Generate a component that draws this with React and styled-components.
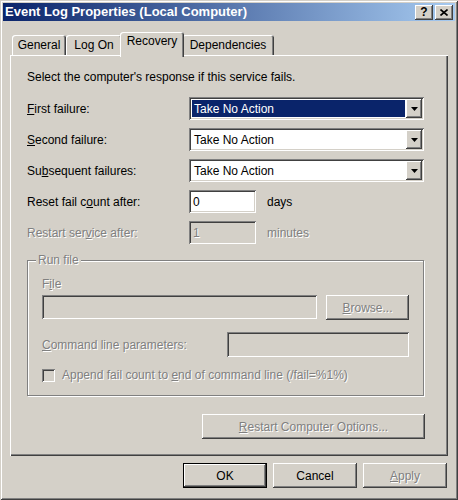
import React from 'react';
import styled, { createGlobalStyle } from 'styled-components';

const Global = createGlobalStyle`
  html, body { margin: 0; padding: 0; background: #d4d0c8; }
  body { font-family: "Liberation Sans", Arial, sans-serif; font-size: 12px; }
  * { box-sizing: border-box; }
`;

const raised = `box-shadow: inset -1px -1px #404040, inset 1px 1px #ffffff, inset -2px -2px #808080, inset 2px 2px #d4d0c8;`;
const sunken = `box-shadow: inset 1px 1px #808080, inset -1px -1px #ffffff, inset 2px 2px #404040, inset -2px -2px #d4d0c8;`;
const disabledText = `color: #808080; text-shadow: 1px 1px 0 #ffffff;`;

const Window = styled.div`
  width: 458px;
  height: 500px;
  padding: 3px;
  display: flex;
  flex-direction: column;
  background: #d4d0c8;
  box-shadow: inset 1px 1px #d4d0c8, inset -1px -1px #404040, inset 2px 2px #ffffff, inset -2px -2px #808080;
  color: #000;
  font-family: "Liberation Sans", Arial, sans-serif;
  font-size: 12px;
  line-height: 14px;
`;

const TitleBar = styled.div`
  height: 18px;
  flex: none;
  display: flex;
  align-items: center;
  padding: 0 2px;
  background: linear-gradient(to right, #0a246a, #a6caf0);
`;

const Title = styled.div`
  flex: 1;
  color: #ffffff;
  font-weight: bold;
  font-size: 13px;
  white-space: nowrap;
`;

const CapButton = styled.div`
  width: 18px;
  height: 15px;
  background: #d4d0c8;
  ${raised}
  display: flex;
  align-items: center;
  justify-content: center;
  font-weight: bold;
  font-size: 12px;
  line-height: 12px;
  color: #000;
  & + & { margin-left: 2px; }
`;

const Body = styled.div`
  flex: 1;
  display: flex;
  flex-direction: column;
  padding: 11px 7px 9px;
`;

const TabRow = styled.div`
  height: 23px;
  flex: none;
  display: flex;
  align-items: flex-end;
  padding-left: 2px;
  position: relative;
  z-index: 1;
`;

const Tab = styled.div`
  width: ${p => p.$w}px;
  height: ${p => (p.$active ? 25 : 20)}px;
  margin: 0 ${p => (p.$active ? '-2px' : '0')} ${p => (p.$active ? '-2px' : '0')} ${p => (p.$active ? '-2px' : '0')};
  padding-top: ${p => (p.$active ? 2 : 3)}px;
  text-align: center;
  background: #d4d0c8;
  border-radius: 3px 3px 0 0;
  box-shadow: inset 1px 1px #ffffff, inset -1px 0 #404040, inset -2px 0 #808080;
  position: relative;
  z-index: ${p => (p.$active ? 2 : 1)};
`;

const Panel = styled.div`
  flex: 1;
  display: flex;
  flex-direction: column;
  padding: 15px 23px 0 17px;
  box-shadow: inset 1px 1px #ffffff, inset -1px -1px #404040, inset -2px -2px #808080;
`;

const Intro = styled.div`
  margin-bottom: 13px;
`;

const FormGrid = styled.div`
  display: grid;
  grid-template-columns: 162px auto;
  grid-auto-rows: 23px;
  row-gap: 8px;
  align-items: center;
`;

const Label = styled.div`
  white-space: nowrap;
  ${p => (p.$disabled ? disabledText : '')}
`;

const Key = styled.span`
  text-decoration: underline;
  text-underline-offset: 1px;
`;

const Combo = styled.div`
  width: 235px;
  height: 23px;
  background: #ffffff;
  ${sunken}
  padding: 2px;
  display: flex;
`;

const ComboText = styled.div`
  flex: 1;
  margin: 1px;
  padding-left: 2px;
  display: flex;
  align-items: center;
  background: ${p => (p.$focus ? '#0a246a' : 'transparent')};
  color: ${p => (p.$focus ? '#ffffff' : '#000000')};
`;

const DropButton = styled.div`
  width: 16px;
  background: #d4d0c8;
  ${raised}
  display: flex;
  align-items: center;
  justify-content: center;
`;

const UnitRow = styled.div`
  display: flex;
  align-items: center;
  gap: 11px;
`;

const Field = styled.div`
  width: ${p => (p.$w ? `${p.$w}px` : 'auto')};
  flex: ${p => (p.$w ? 'none' : '1')};
  height: ${p => p.$h || 23}px;
  ${sunken}
  background: ${p => (p.$disabled ? '#d4d0c8' : '#ffffff')};
  padding: 0 4px;
  display: flex;
  align-items: center;
  ${p => (p.$disabled ? disabledText : '')}
`;

const Unit = styled.span`
  ${p => (p.$disabled ? disabledText : '')}
`;

const Group = styled.fieldset`
  margin: 9px 0 0;
  padding: 0;
  width: 397px;
  min-width: 0;
  border: 1px solid #808080;
  box-shadow: inset 1px 1px #ffffff, 1px 1px 0 #ffffff;
`;

const Legend = styled.legend`
  margin-left: 8px;
  padding: 0 2px;
  background: #d4d0c8;
  line-height: 14px;
  ${disabledText}
`;

const GroupInner = styled.div`
  padding: 10px 14px 13px;
  display: flex;
  flex-direction: column;
`;

const FileRow = styled.div`
  display: flex;
  gap: 9px;
  align-items: flex-start;
  margin-top: 4px;
`;

const CmdRow = styled.div`
  display: flex;
  align-items: center;
  justify-content: space-between;
  margin-top: 12px;
`;

const CheckRow = styled.div`
  display: flex;
  align-items: center;
  gap: 7px;
  margin-top: 11px;
  height: 14px;
`;

const CheckBox = styled.div`
  width: 13px;
  height: 13px;
  flex: none;
  background: #d4d0c8;
  ${sunken}
`;

const Button = styled.div`
  width: ${p => p.$w || 84}px;
  height: 25px;
  flex: none;
  background: #d4d0c8;
  ${raised}
  border: ${p => (p.$default ? '1px solid #000000' : 'none')};
  display: flex;
  align-items: center;
  justify-content: center;
  white-space: nowrap;
  ${p => (p.$disabled ? disabledText : '')}
`;

const RestartButton = styled(Button)`
  align-self: flex-end;
  margin-top: 18px;
`;

const ButtonRow = styled.div`
  flex: none;
  display: flex;
  justify-content: flex-end;
  gap: 6px;
  margin-top: 7px;
  padding-right: 1px;
`;

const Arrow = () => (
  <svg width="7" height="4" viewBox="0 0 7 4">
    <path d="M0 0H7L3.5 4Z" fill="#000" />
  </svg>
);

const CloseGlyph = () => (
  <svg width="8" height="7" viewBox="0 0 8 7">
    <path d="M0.5 0.5L7.5 6.5M7.5 0.5L0.5 6.5" stroke="#000" strokeWidth="1.6" />
  </svg>
);

const ComboBox = ({ focus }) => (
  <Combo>
    <ComboText $focus={focus}>Take No Action</ComboText>
    <DropButton><Arrow /></DropButton>
  </Combo>
);

export default function App() {
  return (
    <>
      <Global />
      <Window>
        <TitleBar>
          <Title>Event Log Properties (Local Computer)</Title>
          <CapButton>?</CapButton>
          <CapButton><CloseGlyph /></CapButton>
        </TitleBar>
        <Body>
          <TabRow>
            <Tab $w={54}>General</Tab>
            <Tab $w={56}>Log On</Tab>
            <Tab $w={64} $active>Recovery</Tab>
            <Tab $w={92}>Dependencies</Tab>
          </TabRow>
          <Panel>
            <Intro>Select the computer's response if this service fails.</Intro>
            <FormGrid>
              <Label><Key>F</Key>irst failure:</Label>
              <ComboBox focus />
              <Label><Key>S</Key>econd failure:</Label>
              <ComboBox />
              <Label>Su<Key>b</Key>sequent failures:</Label>
              <ComboBox />
              <Label>Reset fail c<Key>o</Key>unt after:</Label>
              <UnitRow>
                <Field $w={67}>0</Field>
                <Unit>days</Unit>
              </UnitRow>
              <Label $disabled>Restart ser<Key>v</Key>ice after:</Label>
              <UnitRow>
                <Field $w={67} $disabled>1</Field>
                <Unit $disabled>minutes</Unit>
              </UnitRow>
            </FormGrid>
            <Group>
              <Legend>Run file</Legend>
              <GroupInner>
                <Label $disabled>F<Key>i</Key>le</Label>
                <FileRow>
                  <Field $h={24} $disabled />
                  <Button $w={83} $disabled><Key>B</Key>rowse...</Button>
                </FileRow>
                <CmdRow>
                  <Label $disabled><Key>C</Key>ommand line parameters:</Label>
                  <Field $w={182} $h={25} $disabled />
                </CmdRow>
                <CheckRow>
                  <CheckBox />
                  <Label $disabled>Append fail count to <Key>e</Key>nd of command line (/fail=%1%)</Label>
                </CheckRow>
              </GroupInner>
            </Group>
            <RestartButton $w={223} $disabled><Key>R</Key>estart Computer Options...</RestartButton>
          </Panel>
          <ButtonRow>
            <Button $default>OK</Button>
            <Button>Cancel</Button>
            <Button $disabled><Key>A</Key>pply</Button>
          </ButtonRow>
        </Body>
      </Window>
    </>
  );
}
